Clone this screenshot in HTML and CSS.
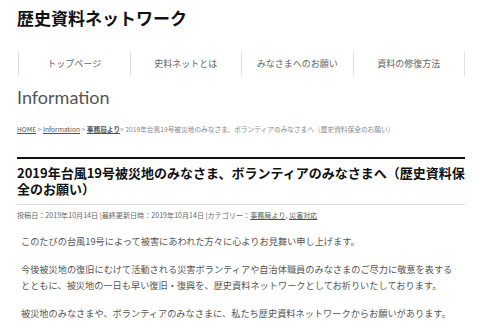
FILE: index.html
```html
<!DOCTYPE html>
<html lang="ja">
<head>
    <meta charset="UTF-8">
    <title>歴史資料ネットワーク</title>
    <link rel="stylesheet" href="styles.css">
</head>
<body>

<header class="site-header">
    <div class="site-title">歴史資料ネットワーク</div>
</header>

<nav class="global-nav">
    <a href="#">トップページ</a>
    <a href="#">史料ネットとは</a>
    <a href="#">みなさまへのお願い</a>
    <a href="#">資料の修復方法</a>
</nav>

<div class="page-title">Information</div>

<div class="breadcrumb">
    <a href="#">HOME</a> &gt; <a href="#">Information</a> &gt; <a href="#" class="strong">事務局より</a>&gt; 2019年台風19号被災地のみなさま、ボランティアのみなさまへ（歴史資料保全のお願い）
</div>

<article class="entry">
    <h1 class="entry-title">2019年台風19号被災地のみなさま、ボランティアのみなさまへ（歴史資料保全のお願い）</h1>
    <div class="entry-meta">
        投稿日：2019年10月14日 |最終更新日時：2019年10月14日 |カテゴリー：<a href="#">事務局より</a>, <a href="#">災害対応</a>
    </div>
    <div class="entry-body">
        <p>このたびの台風19号によって被害にあわれた方々に心よりお見舞い申し上げます。</p>
        <p>今後被災地の復旧にむけて活動される災害ボランティアや自治体職員のみなさまのご尽力に敬意を表するとともに、被災地の一日も早い復旧・復興を、歴史資料ネットワークとしてお祈りいたしております。</p>
        <p>被災地のみなさまや、ボランティアのみなさまに、私たち歴史資料ネットワークからお願いがあります。</p>
    </div>
</article>

</body>
</html>
```

FILE: styles.css
```css
body {
    margin: 0;
    padding: 0 25px 0 17px;
    background: #fff;
    color: #555;
    font-family: "Noto Sans CJK JP", "Noto Sans", sans-serif;
}
a {
    color: inherit;
}
.site-header {
    padding-top: 7px;
    height: 44px;
}
.site-title {
    font-size: 17px;
    font-weight: bold;
    color: #111;
    line-height: 22px;
}
.global-nav {
    display: flex;
    margin-left: 1px;
    width: 446px;
    height: 25px;
    border-right: 1px solid #e2e2e2;
}
.global-nav a {
    flex: 1;
    border-left: 1px solid #e2e2e2;
    text-align: center;
    line-height: 25px;
    font-size: 9px;
    color: #666;
    text-decoration: none;
}
.page-title {
    margin-top: 8px;
    font-family: Lato, sans-serif;
    font-size: 18px;
    line-height: 26px;
    color: #555;
}
.breadcrumb {
    margin-top: 14px;
    font-size: 6.7px;
    line-height: 10px;
    color: #888;
}
.breadcrumb a {
    color: #555;
}
.breadcrumb .strong {
    font-weight: bold;
}
.entry {
    margin-top: 23px;
    width: 448px;
    border-top: 2px solid #111;
}
.entry-title {
    margin: 0;
    padding: 6px 0 7px;
    font-size: 13px;
    line-height: 16px;
    color: #111;
    border-bottom: 1px solid #ddd;
}
.entry-meta {
    margin-top: 5px;
    font-size: 7.1px;
    line-height: 10px;
    color: #666;
}
.entry-meta a {
    color: #555;
}
.entry-body {
    padding: 13px 0 0 4px;
    width: 434px;
    font-size: 9.2px;
    line-height: 16px;
    color: #555;
}
.entry-body p {
    margin: 0 0 12px;
}
```
